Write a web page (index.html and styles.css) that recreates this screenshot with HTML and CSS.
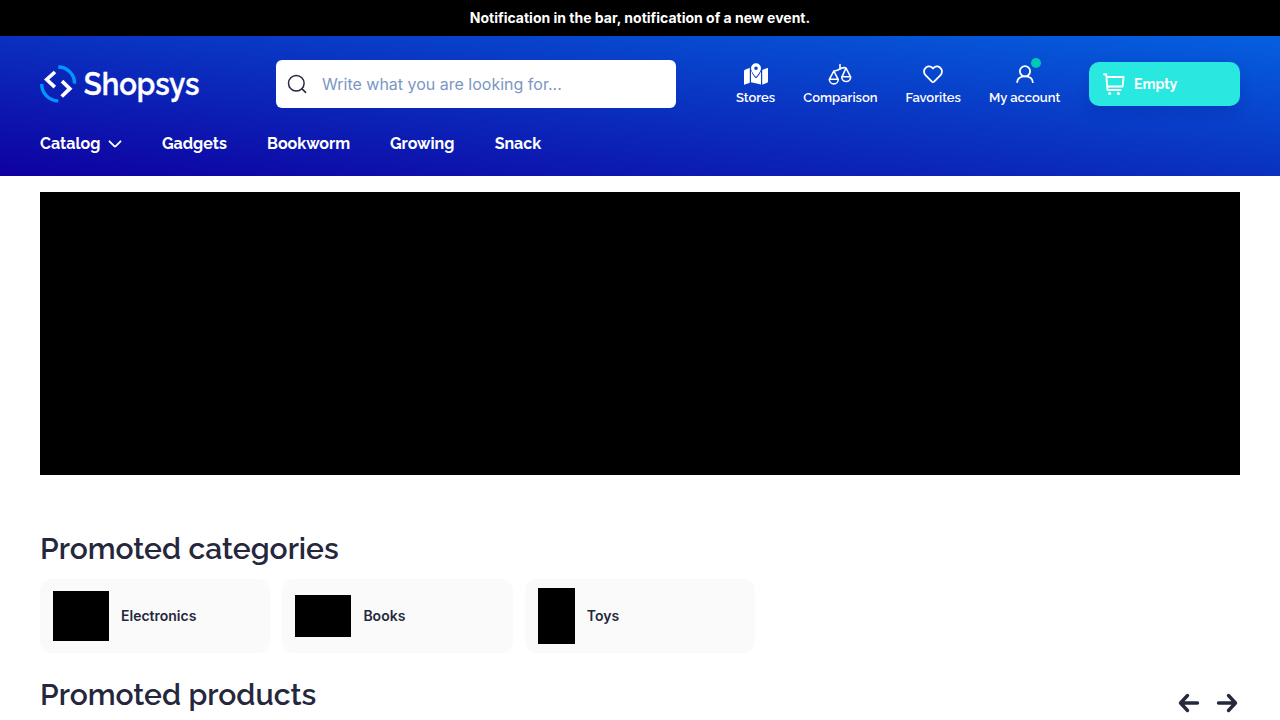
FILE: index.html
```html
<!DOCTYPE html>
<html lang="en">
<head>
<meta charset="utf-8">
<title>Shopsys</title>
<link rel="stylesheet" href="styles.css">
</head>
<body>
<div class="notice">Notification in the bar, notification of a new event.</div>
<header class="header">
  <div class="topbar">
    <a class="logo">
      <svg width="180" height="48" viewBox="0 -4 180 48" fill="none">
        <path d="M18.200 3A16.300 16.300 0 0 1 34.500 19.600M1.700 20A16.600 16.900 0 0 0 18.200 36.900" stroke="#0096ff" stroke-width="3.400"/>
        <path d="M15 8L6.700 15.500L14.800 23.200M22 17.200L29.800 24.700L21.700 32.500" stroke="#fff" stroke-width="3.700"/>
        <text class="logo-text" x="43.800" y="31.300" textLength="115.600" lengthAdjust="spacingAndGlyphs">Shopsys</text>
      </svg>
    </a>
    <div class="search">
      <svg width="20" height="20" viewBox="0 0 20 20" fill="none" stroke="#25283d" stroke-width="1.5" stroke-linecap="round"><circle cx="9.300" cy="9.200" r="7.800"/><path d="M15 14.900L18.600 18.400"/></svg>
      <span>Write what you are looking for...</span>
    </div>
    <nav class="links">
      <a class="link stores"><svg width="24" height="24" viewBox="0 0 24 24" fill="#fff"><path d="M0 9.200Q0 8.200 1 7.800L5.800 5.800V20.700L.9 22.600Q0 23 0 22ZM18.200 8.100L23 6.100Q24 5.700 24 6.700V19.500Q24 20.400 23.200 20.700L18.200 22.700ZM7 8.500Q8 12 11 15.400Q12 16.500 13 15.400Q15.500 12.800 17 9.500V22.600L7 20.300Z"/><path fill-rule="evenodd" d="M12 1.300A5 5 0 0 1 17 6.300C17 9 13.800 13 12.500 14.500Q12 15 11.500 14.500C10.200 13 7 9 7 6.300A5 5 0 0 1 12 1.300ZM12 4.500A1.800 1.800 0 1 0 12 8.100A1.800 1.800 0 1 0 12 4.500Z"/></svg><span>Stores</span></a>
      <a class="link comparison"><svg width="24" height="24" viewBox="0 0 24 24" fill="none" stroke="#fff" stroke-width="1.600" stroke-linecap="round" stroke-linejoin="round"><path d="M12 2.500V7.200M5.800 9Q8.500 9 12 7T18 6M5.800 9L1.500 17.200M5.800 9L10 17.200M18 6L14 14.800M18 6L22.500 14.800M1.300 17.200H10.300A4.500 4.700 0 0 1 1.300 17.200M13.700 14.800H22.700A4.500 4.700 0 0 1 13.700 14.800"/></svg><span>Comparison</span></a>
      <a class="link favorites"><svg width="24" height="24" viewBox="0 -.5 24 24" fill="none" stroke="#fff" stroke-width="1.800" stroke-linejoin="round"><path d="M12 6C10 3.300 7 3.200 5 5C2.300 7.200 2.500 10.700 4.700 12.900L10.900 19.200Q12 20.200 13.100 19.200L19.300 12.900C21.500 10.700 21.700 7.200 19 5C17 3.200 14 3.300 12 6Z"/></svg><span>Favorites</span></a>
      <a class="link account"><i class="dot"></i><svg width="24" height="24" viewBox="0 -.5 24 24" fill="none" stroke="#fff" stroke-width="1.800" stroke-linecap="round"><circle cx="12" cy="8.800" r="5.100"/><path d="M4.200 19.700C4.500 16 7.500 13.900 12 13.900S19.500 16 19.800 19.700"/></svg><span>My account</span></a>
    </nav>
    <a class="cart">
      <svg width="24" height="24" viewBox="0 0 24 24" fill="none" stroke="#fff" stroke-width="1.900" stroke-linecap="round" stroke-linejoin="round"><path d="M2 2.200H4.200L5.500 18H18.500M4.700 5H21.600L20.600 14.500H5.300"/><circle cx="7.700" cy="21.500" r=".6" fill="#fff"/><circle cx="16.400" cy="21.500" r=".6" fill="#fff"/></svg>
      <span>Empty</span>
    </a>
  </div>
  <nav class="menu">
    <a class="catalog"><span class="m1">Catalog</span><svg width="14" height="10" viewBox="0 0 14 10" fill="none" stroke="#fff" stroke-width="1.900" stroke-linecap="round" stroke-linejoin="round"><path d="M1.500 2.300L6.500 7.300Q7 7.700 7.500 7.300L12.500 2.300"/></svg></a>
    <a class="m2">Gadgets</a><a class="m3">Bookworm</a><a class="m4">Growing</a><a class="m5">Snack</a>
  </nav>
</header>
<main class="main">
  <div class="banner"></div>
  <h2 class="title categories-title"><span>Promoted categories</span></h2>
  <div class="categories">
    <a class="card"><i class="thumb electronics"></i><span>Electronics</span></a>
    <a class="card"><i class="thumb books"></i><span>Books</span></a>
    <a class="card"><i class="thumb toys"></i><span>Toys</span></a>
  </div>
  <div class="products-head">
    <h2 class="title products-title"><span>Promoted products</span></h2>
    <div class="arrows">
      <svg width="24" height="24" viewBox="0 0 24 24" fill="none" stroke="#25283d" stroke-width="3.400" stroke-linecap="round" stroke-linejoin="round"><path d="M20.500 12H4M10.500 4.500L3.500 12L10.500 19.500"/></svg>
      <svg width="24" height="24" viewBox="0 0 24 24" fill="none" stroke="#25283d" stroke-width="3.400" stroke-linecap="round" stroke-linejoin="round"><path d="M3.500 12H20M13.500 4.500L20.500 12L13.500 19.500"/></svg>
    </div>
  </div>
</main>
</body>
</html>
```
FILE: styles.css
```css
* { box-sizing: border-box; }
body { margin: 0; height: 720px; overflow: hidden; background: #fff; color: #25283d; font-family: Inter, sans-serif; }
svg { display: block; flex: none; }
.notice { height: 36px; background: #000; color: #fff; font-size: 14px; font-weight: 700; line-height: 36px; text-align: center; }
.header { height: 140px; padding: 24px 40px 0; color: #fff; font-family: Raleway, Lato, sans-serif; background: linear-gradient(to top right, #0f00a0, #0560df); }
.topbar { display: flex; align-items: center; height: 48px; }
.logo { width: 236px; }
.logo-text { font: 600 32px Raleway, Lato, sans-serif; fill: #fff; stroke: #fff; stroke-width: .4px; }
.search { display: flex; align-items: center; width: 400px; height: 48px; padding-left: 11px; gap: 15px; background: #fff; border-radius: 6px; color: #7c96c3; font: 16px Inter, sans-serif; }
.links { display: flex; gap: 28px; margin-left: 60px; }
.link { position: relative; display: flex; flex-direction: column; align-items: center; font-size: 13px; font-weight: 600; line-height: 16px; gap: 4px; white-space: nowrap; }
.stores { width: 39.300px; }
.comparison { width: 74.200px; }
.favorites { width: 55.600px; }
.account { width: 71px; }
.dot { position: absolute; left: 42px; top: -4px; width: 10px; height: 10px; border-radius: 50%; background: #00c8b7; }
.cart { display: flex; align-items: center; gap: 8px; width: 151px; height: 44px; margin-left: auto; padding-left: 13px; border-radius: 10px; background: #29e8df; font: 700 14px/20px Raleway, Lato, sans-serif; box-shadow: 0 8px 14px rgba(0, 10, 120, .16); }
.menu { display: flex; gap: 40px; margin-top: 24px; font-size: 16px; font-weight: 700; line-height: 24px; white-space: nowrap; }
.catalog { display: flex; align-items: center; gap: 8px; width: 82px; }
.m1 { width: 60px; }
.m2 { width: 65px; }
.m3 { width: 83px; }
.m4 { width: 64.700px; }
.main { padding: 16px 40px 0; }
.banner { height: 283px; background: #000; }
.title { margin: 0; font: 600 30px/36px Raleway, Lato, sans-serif; white-space: nowrap; }
.categories-title { margin-top: 56px; }
.categories { display: grid; grid-template-columns: repeat(3, 230.400px); gap: 12px; margin-top: 12px; }
.card { display: flex; align-items: center; gap: 12px; height: 74px; padding-left: 13px; border-radius: 12px; background: #fafafa; font-size: 14px; line-height: 20px; font-weight: 600; }
.thumb { background: #000; }
.electronics { width: 56px; height: 50px; }
.books { width: 56px; height: 42px; }
.toys { width: 37px; height: 56px; }
.products-head { display: flex; justify-content: space-between; margin-top: 24px; }
.arrows { display: flex; gap: 14px; padding: 14px 1px 0 0; }
```
